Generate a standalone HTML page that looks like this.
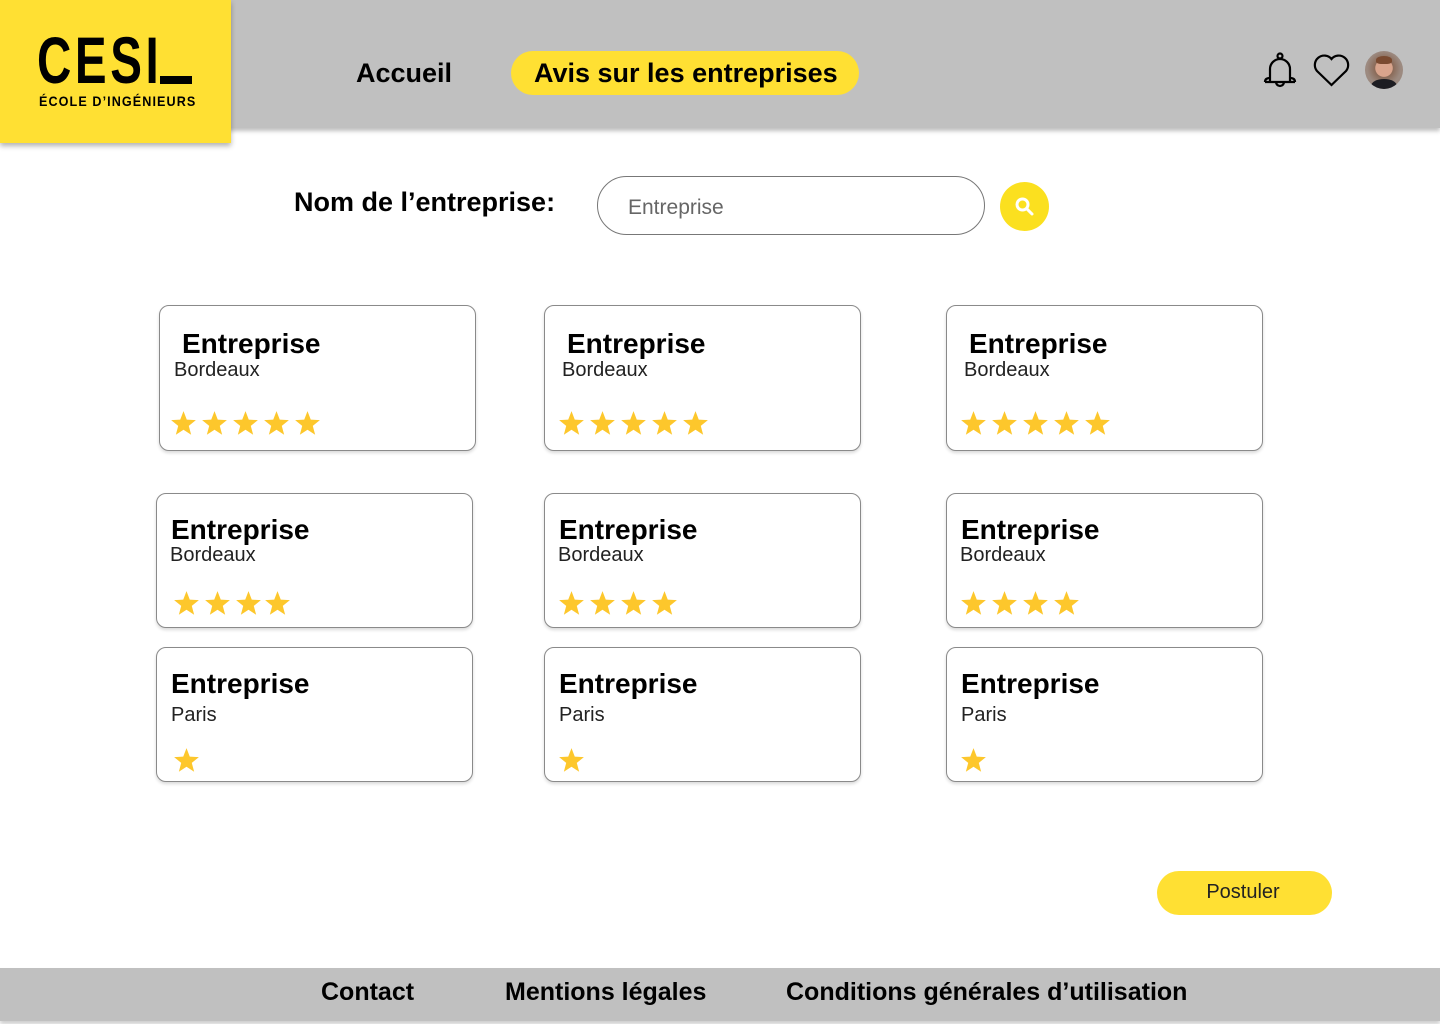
<!DOCTYPE html>
<html><head><meta charset="utf-8"><style>
*{margin:0;padding:0;box-sizing:border-box}
body{width:1440px;height:1024px;position:relative;background:#fff;font-family:"Liberation Sans",sans-serif;overflow:hidden}
.a{position:absolute}
.hdr{left:0;top:0;width:1440px;height:128px;background:#c0c0c0;box-shadow:0 3px 4px rgba(0,0,0,.25)}
.logo{left:0;top:0;width:231px;height:143px;background:#ffe033;box-shadow:0 3px 5px rgba(0,0,0,.3)}
.card{border:1px solid #8a8a8a;border-radius:10px;background:#fff;box-shadow:0 2px 3px rgba(0,0,0,.15)}
.t{font-weight:bold;font-size:28px;color:#000;line-height:1}
.c{font-size:20px;color:#222;line-height:1;font-weight:300}
.s{width:27px;height:27px}
.ft{left:0;top:968px;width:1440px;height:53px;background:#c0c0c0;box-shadow:0 3px 4px rgba(0,0,0,.2)}
.fl{font-weight:bold;font-size:25px;top:978px;color:#000}
</style></head><body>
<div class="a hdr"></div>
<div class="a logo">
 <div class="a" style="left:37px;top:27px;font-size:66px;font-weight:bold;letter-spacing:5px;line-height:66px;transform:scaleX(.72);transform-origin:left;white-space:nowrap">CESI</div>
 <div class="a" style="left:160px;top:76px;width:32px;height:8px;background:#000"></div>
 <div class="a" style="left:39px;top:93px;font-size:14px;font-weight:bold;letter-spacing:1.2px;transform:scaleX(.9);transform-origin:left;white-space:nowrap">ÉCOLE D’INGÉNIEURS</div>
</div>
<div class="a" style="left:356px;top:58px;font-size:27px;font-weight:bold">Accueil</div>
<div class="a" style="left:511px;top:51px;width:348px;height:44px;border-radius:22px;background:#ffe033"></div>
<div class="a" style="left:534px;top:58px;font-size:27px;font-weight:bold;white-space:nowrap">Avis sur les entreprises</div>
<svg class="a" style="left:1262px;top:52px" width="36" height="38" viewBox="0 0 36 38" fill="none" stroke="#000" stroke-width="2.2"><circle cx="18" cy="4" r="2.5"/><path d="M8 30 V17 a10 10 0 0 1 20 0 V30 M3 30 Q3 26 8 26 M33 30 Q33 26 28 26 M3 30 H33 M14 30 a4 4 0 0 0 8 0"/></svg>
<svg class="a" style="left:1313px;top:54px" width="37" height="34" viewBox="0 0 37 34" fill="none" stroke="#000" stroke-width="2.2"><path d="M18.5 31 L4 17 A8.5 8.5 0 0 1 18.5 5 A8.5 8.5 0 0 1 33 17 Z"/></svg>
<div class="a" style="left:1365px;top:51px;width:38px;height:38px;border-radius:50%;background:radial-gradient(circle at 50% 45%,#d9a48c 0 30%,#8a6a58 32%,#9c8a80 60%);overflow:hidden"><div class="a" style="left:6px;top:28px;width:26px;height:14px;border-radius:50% 50% 0 0;background:#1d1d22"></div><div class="a" style="left:11px;top:5px;width:16px;height:8px;border-radius:50% 50% 30% 30%;background:#7a4a30"></div></div>

<div class="a" style="left:294px;top:187px;font-size:27px;font-weight:bold;white-space:nowrap">Nom de l’entreprise:</div>
<div class="a" style="left:597px;top:176px;width:388px;height:59px;border:1px solid #777;border-radius:30px"></div>
<div class="a" style="left:628px;top:196px;font-size:21px;color:#666">Entreprise</div>
<div class="a" style="left:1000px;top:182px;width:49px;height:49px;border-radius:50%;background:#fbe01f"></div>
<svg class="a" style="left:1014px;top:196px" width="22" height="22" viewBox="0 0 22 22" fill="none" stroke="#fff" stroke-width="3"><circle cx="8.5" cy="8.5" r="5.5"/><path d="M12.5 12.5 L18 18" stroke-linecap="round"/></svg>

<svg width="0" height="0" style="position:absolute"><defs><symbol id="st" viewBox="0 0 24 24"><polygon fill="#fdc72c" points="12,1 14.9,8.6 23,9 16.7,14.1 18.8,22 12,17.6 5.2,22 7.3,14.1 1,9 9.1,8.6"/></symbol></defs></svg>

<div class="a card" style="left:159px;top:305px;width:317px;height:146px"></div>
<div class="a t" style="left:182px;top:330px">Entreprise</div><div class="a c" style="left:174px;top:360px">Bordeaux</div>
<div class="a card" style="left:544px;top:305px;width:317px;height:146px"></div>
<div class="a t" style="left:567px;top:330px">Entreprise</div><div class="a c" style="left:562px;top:360px">Bordeaux</div>
<div class="a card" style="left:946px;top:305px;width:317px;height:146px"></div>
<div class="a t" style="left:969px;top:330px">Entreprise</div><div class="a c" style="left:964px;top:360px">Bordeaux</div>
<div class="a card" style="left:156px;top:493px;width:317px;height:135px"></div>
<div class="a t" style="left:171px;top:516px">Entreprise</div><div class="a c" style="left:170px;top:545px">Bordeaux</div>
<div class="a card" style="left:544px;top:493px;width:317px;height:135px"></div>
<div class="a t" style="left:559px;top:516px">Entreprise</div><div class="a c" style="left:558px;top:545px">Bordeaux</div>
<div class="a card" style="left:946px;top:493px;width:317px;height:135px"></div>
<div class="a t" style="left:961px;top:516px">Entreprise</div><div class="a c" style="left:960px;top:545px">Bordeaux</div>
<div class="a card" style="left:156px;top:647px;width:317px;height:135px"></div>
<div class="a t" style="left:171px;top:670px">Entreprise</div><div class="a c" style="left:171px;top:705px">Paris</div>
<div class="a card" style="left:544px;top:647px;width:317px;height:135px"></div>
<div class="a t" style="left:559px;top:670px">Entreprise</div><div class="a c" style="left:559px;top:705px">Paris</div>
<div class="a card" style="left:946px;top:647px;width:317px;height:135px"></div>
<div class="a t" style="left:961px;top:670px">Entreprise</div><div class="a c" style="left:961px;top:705px">Paris</div>

<svg class="a s" style="left:170px;top:410px"><use href="#st"/></svg><svg class="a s" style="left:201px;top:410px"><use href="#st"/></svg><svg class="a s" style="left:232px;top:410px"><use href="#st"/></svg><svg class="a s" style="left:263px;top:410px"><use href="#st"/></svg><svg class="a s" style="left:294px;top:410px"><use href="#st"/></svg>
<svg class="a s" style="left:558px;top:410px"><use href="#st"/></svg><svg class="a s" style="left:589px;top:410px"><use href="#st"/></svg><svg class="a s" style="left:620px;top:410px"><use href="#st"/></svg><svg class="a s" style="left:651px;top:410px"><use href="#st"/></svg><svg class="a s" style="left:682px;top:410px"><use href="#st"/></svg>
<svg class="a s" style="left:960px;top:410px"><use href="#st"/></svg><svg class="a s" style="left:991px;top:410px"><use href="#st"/></svg><svg class="a s" style="left:1022px;top:410px"><use href="#st"/></svg><svg class="a s" style="left:1053px;top:410px"><use href="#st"/></svg><svg class="a s" style="left:1084px;top:410px"><use href="#st"/></svg>
<svg class="a s" style="left:173px;top:590px"><use href="#st"/></svg><svg class="a s" style="left:204px;top:590px"><use href="#st"/></svg><svg class="a s" style="left:235px;top:590px"><use href="#st"/></svg><svg class="a s" style="left:264px;top:590px"><use href="#st"/></svg>
<svg class="a s" style="left:558px;top:590px"><use href="#st"/></svg><svg class="a s" style="left:589px;top:590px"><use href="#st"/></svg><svg class="a s" style="left:620px;top:590px"><use href="#st"/></svg><svg class="a s" style="left:651px;top:590px"><use href="#st"/></svg>
<svg class="a s" style="left:960px;top:590px"><use href="#st"/></svg><svg class="a s" style="left:991px;top:590px"><use href="#st"/></svg><svg class="a s" style="left:1022px;top:590px"><use href="#st"/></svg><svg class="a s" style="left:1053px;top:590px"><use href="#st"/></svg>
<svg class="a s" style="left:173px;top:747px"><use href="#st"/></svg>
<svg class="a s" style="left:558px;top:747px"><use href="#st"/></svg>
<svg class="a s" style="left:960px;top:747px"><use href="#st"/></svg>

<div class="a" style="left:1157px;top:871px;width:175px;height:44px;border-radius:22px;background:#ffe033"></div>
<div class="a" style="left:1157px;top:881px;width:172px;text-align:center;font-size:20px;color:#222">Postuler</div>

<div class="a ft"></div>
<div class="a fl" style="left:321px">Contact</div>
<div class="a fl" style="left:505px">Mentions légales</div>
<div class="a fl" style="left:786px">Conditions générales d’utilisation</div>
</body></html>
